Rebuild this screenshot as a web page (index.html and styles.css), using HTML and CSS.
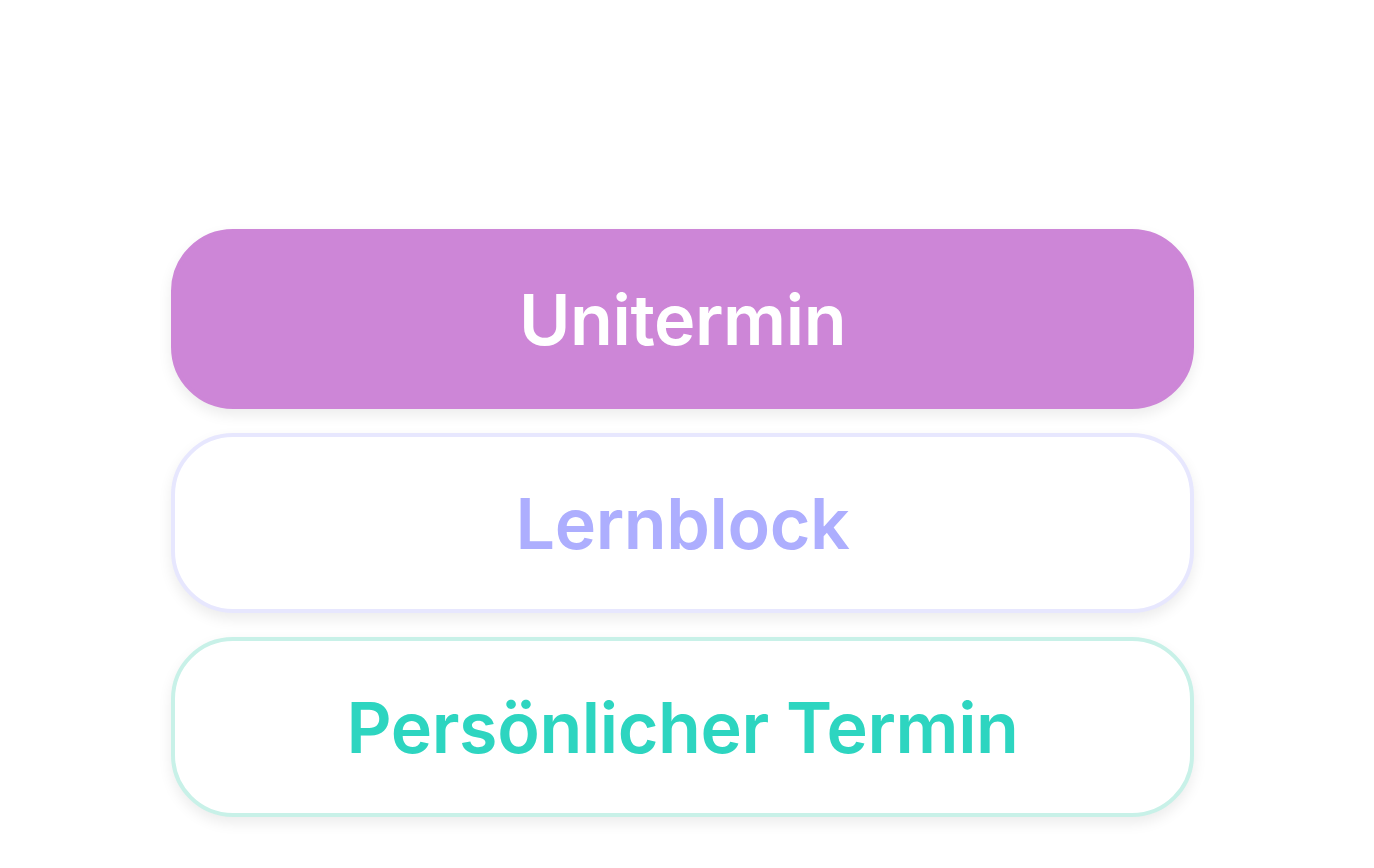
FILE: index.html
```html
<!DOCTYPE html>
<html lang="de">
<head>
<meta charset="utf-8">
<title>Termin auswählen</title>
<link rel="stylesheet" href="styles.css">
</head>
<body>
<main class="screen">
  <div class="choices">
    <button class="choice choice--uni">Unitermin</button>
    <button class="choice choice--learn">Lernblock</button>
    <button class="choice choice--personal">Persönlicher Termin</button>
  </div>
</main>
</body>
</html>
```
FILE: styles.css
```css
* { box-sizing: border-box; }
html, body {
  margin: 0;
  padding: 0;
  background: #ffffff;
}
.screen {
  width: 1374px;
  height: 868px;
  padding: 229px 0 0 171px;
  font-family: "Inter", "Noto Sans", sans-serif;
}
.choices {
  display: flex;
  flex-direction: column;
  gap: 24px;
  width: 1023px;
}
.choice {
  display: flex;
  align-items: center;
  justify-content: center;
  height: 180px;
  border-radius: 62px;
  font-family: inherit;
  font-size: 70px;
  font-weight: 600;
  letter-spacing: -0.4px;
  background: #ffffff;
  border: 4px solid transparent;
  box-shadow: 0 6px 14px rgba(0, 0, 0, 0.08);
  padding: 0;
  cursor: pointer;
}
.choice--uni {
  background: #cd86d7;
  border-color: #cd86d7;
  color: #ffffff;
}
.choice--learn {
  border-color: #e7e7fe;
  color: #adaefe;
}
.choice--personal {
  border-color: #c8f1e8;
  color: #2dd5c0;
}
```
